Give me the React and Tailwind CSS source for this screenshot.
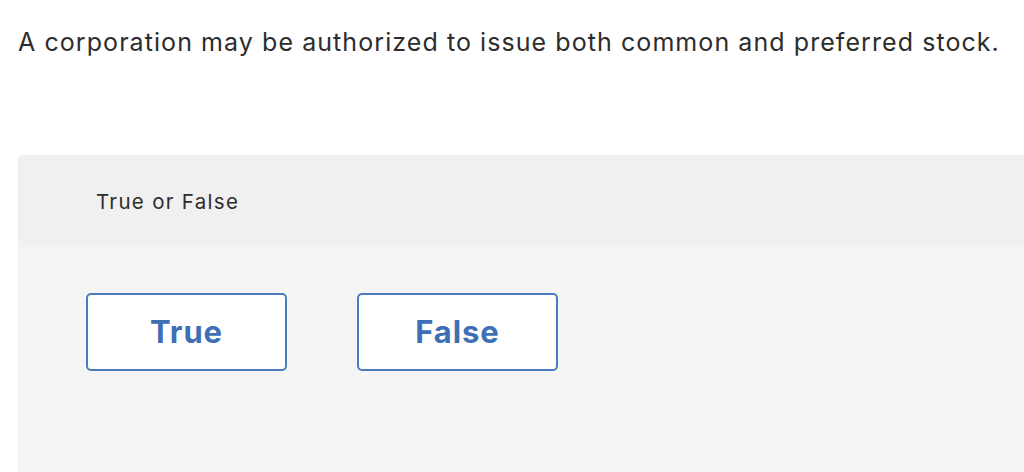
export default function App() {
  return (
    <div className="w-[1024px] h-[472px] overflow-hidden bg-white" style={{ fontFamily: "Inter, 'Open Sans', sans-serif" }}>
      <p className="pl-[18px] pt-[25px] text-[25px] leading-[34px] tracking-[1.07px] text-[#2d2d2d]">
        A corporation may be authorized to issue both common and preferred stock.
      </p>
      <div className="ml-[18px] mt-[96px] w-[1040px] rounded-tl-[5px] overflow-hidden">
        <div className="h-[92px] bg-[#f0f0f0] flex items-center pl-[78px] pt-[3px]">
          <span className="text-[20.5px] tracking-[1.3px] text-[#2d2d2d]">True or False</span>
        </div>
        <div className="h-[240px] bg-[#f5f5f5] pl-[68px] pt-[46px] flex gap-[70px] items-start">
          <button className="w-[201px] h-[78px] bg-white border-2 border-[#4a7bbf] rounded-[5px] text-[#3e6fb5] text-[31px] tracking-[0.9px] font-bold">
            True
          </button>
          <button className="w-[201px] h-[78px] bg-white border-2 border-[#4a7bbf] rounded-[5px] text-[#3e6fb5] text-[31px] tracking-[0.9px] font-bold">
            False
          </button>
        </div>
      </div>
    </div>
  );
}
